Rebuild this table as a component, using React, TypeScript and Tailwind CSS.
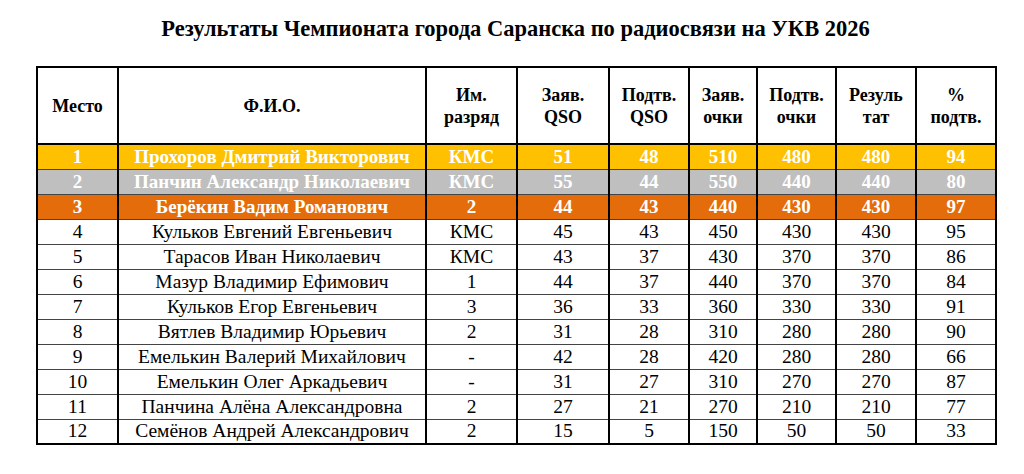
const rows: [string, string, string, number, number, number, number, number, number][] = [
  ["1", "Прохоров Дмитрий Викторович", "КМС", 51, 48, 510, 480, 480, 94],
  ["2", "Панчин Александр Николаевич", "КМС", 55, 44, 550, 440, 440, 80],
  ["3", "Берёкин Вадим Романович", "2", 44, 43, 440, 430, 430, 97],
  ["4", "Кульков Евгений Евгеньевич", "КМС", 45, 43, 450, 430, 430, 95],
  ["5", "Тарасов Иван Николаевич", "КМС", 43, 37, 430, 370, 370, 86],
  ["6", "Мазур Владимир Ефимович", "1", 44, 37, 440, 370, 370, 84],
  ["7", "Кульков Егор Евгеньевич", "3", 36, 33, 360, 330, 330, 91],
  ["8", "Вятлев Владимир Юрьевич", "2", 31, 28, 310, 280, 280, 90],
  ["9", "Емелькин Валерий Михайлович", "-", 42, 28, 420, 280, 280, 66],
  ["10", "Емелькин Олег Аркадьевич", "-", 31, 27, 310, 270, 270, 87],
  ["11", "Панчина Алёна Александровна", "2", 27, 21, 270, 210, 210, 77],
  ["12", "Семёнов Андрей Александрович", "2", 15, 5, 150, 50, 50, 33],
];

const headers: [string, string | null, string][] = [
  ["Место", null, "w-[81px]"],
  ["Ф.И.О.", null, "w-[308px]"],
  ["Им.", "разряд", "w-[91px]"],
  ["Заяв.", "QSO", "w-[92px]"],
  ["Подтв.", "QSO", "w-[80px]"],
  ["Заяв.", "очки", "w-[68px]"],
  ["Подтв.", "очки", "w-[79px]"],
  ["Резуль", "тат", "w-[80px]"],
  ["%", "подтв.", "w-[80px]"],
];

// podium rows are bold white on a coloured fill
const podium: Record<string, string> = {
  "1": "bg-[#ffc000] text-white font-bold text-[19px]",
  "2": "bg-[#bfbfbf] text-white font-bold text-[19px]",
  "3": "bg-[#e46c0a] text-white font-bold text-[19px]",
};

export default function App() {
  return (
    <div className="w-[1024px] h-[474px] bg-white text-black font-['Liberation_Serif','Times_New_Roman',serif]">
      <h1 className="pt-[15px] pl-[36px] w-[995px] text-center text-[22.5px] leading-[28px] font-bold">
        Результаты Чемпионата города Саранска по радиосвязи на УКВ 2026
      </h1>
      <table className="mt-[23px] ml-[36px] w-[959px] table-fixed border-collapse border-2 border-black">
        <thead>
          <tr className="h-[77px]">
            {headers.map(([a, b, w], i) => (
              <th
                key={i}
                className={`${w} border-2 border-black text-center align-middle text-[18px] leading-[22px] font-bold`}
              >
                {a}
                {b && (
                  <>
                    <br />
                    {b}
                  </>
                )}
              </th>
            ))}
          </tr>
        </thead>
        <tbody>
          {rows.map((r) => (
            <tr key={r[0]} className={`h-[25px] ${podium[r[0]] ?? "text-[19.5px]"}`}>
              {r.map((c, i) => (
                <td
                  key={i}
                  className="border-x-2 border-x-black border-y border-y-[#444] text-center align-middle leading-[20px] p-0 whitespace-nowrap"
                >
                  {c}
                </td>
              ))}
            </tr>
          ))}
        </tbody>
      </table>
    </div>
  );
}
